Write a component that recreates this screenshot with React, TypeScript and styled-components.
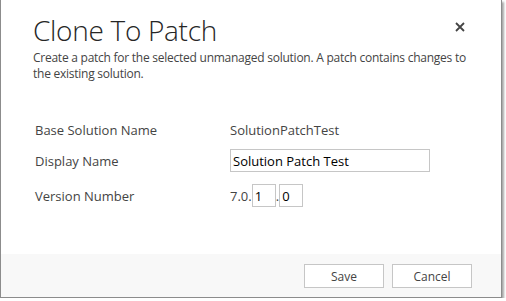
import React from "react";
import styled, { createGlobalStyle } from "styled-components";

const GlobalStyle = createGlobalStyle`
  html, body {
    margin: 0;
    padding: 0;
    background: #ffffff;
  }
  body {
    font-family: "Open Sans", "Noto Sans", "Liberation Sans", sans-serif;
    color: #444444;
  }
`;

const Dialog = styled.div`
  width: 502px;
  height: 298px;
  box-sizing: border-box;
  display: flex;
  flex-direction: column;
  background: #ffffff;
  border-left: 1px solid #8c8c8c;
  border-right: 1px solid #8c8c8c;
  border-bottom: 1px solid #8c8c8c;
  box-shadow: 2px 2px 2px rgba(0, 0, 0, 0.35);
`;

const Body = styled.div`
  flex: 1;
  padding: 12px 32px 0 32px;
`;

const Header = styled.div`
  display: flex;
  justify-content: space-between;
  align-items: flex-start;
`;

const Title = styled.h1`
  margin: 0;
  font-family: "Open Sans", "Noto Sans", sans-serif;
  font-weight: 300;
  font-size: 28px;
  line-height: 36px;
  color: #262626;
  letter-spacing: -0.3px;
`;

const Close = styled.button`
  border: none;
  background: none;
  padding: 0;
  margin: 9px 3px 0 0;
  width: 12px;
  height: 12px;
  display: flex;
  cursor: pointer;
`;

const Description = styled.p`
  margin: 2px 0 0 0;
  width: 445px;
  font-size: 12px;
  line-height: 16px;
  color: #444444;
  letter-spacing: -0.25px;
`;

const Form = styled.div`
  margin-top: 38px;
  padding-left: 2px;
  display: grid;
  grid-template-columns: 195px 1fr;
  grid-template-rows: 31px 35px 33px;
`;

const Label = styled.div`
  font-size: 13px;
  color: #444444;
  padding-top: 1px;
`;

const Value = styled.div`
  font-size: 13px;
  color: #444444;
  display: flex;
  align-items: flex-start;
  padding-top: 1px;
`;

const TextInput = styled.input<{ w: number }>`
  box-sizing: border-box;
  width: ${(p) => p.w}px;
  height: 23px;
  margin: -3px 0 0 0;
  border: 1px solid #c6c6c6;
  padding: 0 2px;
  font-family: "Open Sans", "Noto Sans", sans-serif;
  font-size: 13px;
  color: #000000;
  background: #ffffff;
  outline: none;
`;

const VersionPart = styled.span`
  font-size: 13px;
  color: #444444;
`;

const Footer = styled.div`
  box-sizing: border-box;
  height: 43px;
  background: #f8f8f8;
  display: flex;
  justify-content: flex-end;
  align-items: flex-start;
  gap: 8px;
  padding: 10px 29px 0 0;
`;

const Button = styled.button`
  box-sizing: border-box;
  width: 80px;
  height: 24px;
  border: 1px solid #c6c6c6;
  background: #ffffff;
  font-family: "Open Sans", "Noto Sans", sans-serif;
  font-size: 12px;
  color: #444444;
  padding: 0;
  cursor: pointer;
`;

const CloseIcon = () => (
  <svg width="12" height="12" viewBox="0 0 12 12">
    <path d="M2 2 L10 10 M10 2 L2 10" stroke="#444" strokeWidth="1.8" />
  </svg>
);

export default function App() {
  return (
    <>
      <GlobalStyle />
      <Dialog>
        <Body>
          <Header>
            <Title>Clone To Patch</Title>
            <Close aria-label="Close">
              <CloseIcon />
            </Close>
          </Header>
          <Description>
            Create a patch for the selected unmanaged solution. A patch contains
            changes to the existing solution.
          </Description>
          <Form>
            <Label>Base Solution Name</Label>
            <Value>SolutionPatchTest</Value>
            <Label>Display Name</Label>
            <Value>
              <TextInput w={200} defaultValue="Solution Patch Test" />
            </Value>
            <Label>Version Number</Label>
            <Value>
              <VersionPart>7.0.</VersionPart>
              <TextInput w={24} defaultValue="1" />
              <VersionPart>.</VersionPart>
              <TextInput w={24} defaultValue="0" />
            </Value>
          </Form>
        </Body>
        <Footer>
          <Button>Save</Button>
          <Button>Cancel</Button>
        </Footer>
      </Dialog>
    </>
  );
}
